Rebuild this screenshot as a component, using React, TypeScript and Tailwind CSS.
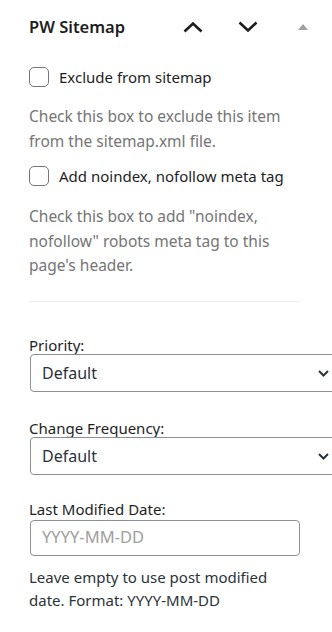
import React from "react";

function Chevron({ up }: { up?: boolean }) {
  return (
    <svg width="20" height="12" viewBox="0 0 20 12" fill="none">
      {up ? (
        <polyline points="1.5,10.5 10,2.5 18.5,10.5" stroke="#1e1e1e" strokeWidth="2.6" strokeLinecap="butt" strokeLinejoin="miter" />
      ) : (
        <polyline points="1.5,1.5 10,9.5 18.5,1.5" stroke="#1e1e1e" strokeWidth="2.6" strokeLinecap="butt" strokeLinejoin="miter" />
      )}
    </svg>
  );
}

function Triangle() {
  return (
    <svg width="10" height="6" viewBox="0 0 10 6">
      <polygon points="5,0 10,6 0,6" fill="#a0a0a0" />
    </svg>
  );
}

function Checkbox({ label }: { label: string }) {
  return (
    <div className="flex items-center gap-[10px] h-[20px]">
      <div className="w-[20px] h-[20px] rounded-[5px] border-[1.5px] border-[#757575] bg-white shrink-0" />
      <span className="text-[15px] leading-[20px] text-[#1e1e1e]">{label}</span>
    </div>
  );
}

function Select() {
  return (
    <div className="relative ml-[1px] w-[309px] h-[38px] rounded-[4px] border border-[#8c8f94] bg-white flex items-center pl-[11px]">
      <span className="text-[16px] text-[#2c3338]">Default</span>
      <svg className="absolute right-[9px] top-[15px]" width="11" height="7" viewBox="0 0 11 7" fill="none">
        <polyline points="1,1 5.5,5.5 10,1" stroke="#2c3338" strokeWidth="2" />
      </svg>
    </div>
  );
}

export default function App() {
  return (
    <div
      className="w-[332px] h-[632px] overflow-hidden bg-white"
      style={{ fontFamily: '"Noto Sans", "Open Sans", sans-serif' }}
    >
      <div className="flex items-center h-[54px] pl-[29px] pr-[2px]">
        <span className="text-[16.5px] font-semibold text-[#1e1e1e] flex-1">PW Sitemap</span>
        <div className="w-[55px] flex justify-center items-center">
          <Chevron up />
        </div>
        <div className="w-[55px] flex justify-center items-center">
          <Chevron />
        </div>
        <div className="w-[55px] flex justify-center items-center">
          <Triangle />
        </div>
      </div>
      <div className="pl-[29px] pr-[32px] flex flex-col">
        <div className="mt-[13px]">
          <Checkbox label="Exclude from sitemap" />
        </div>
        <p className="mt-[17px] text-[15.5px] leading-[25px] text-[#757575]">
          Check this box to exclude this item from the sitemap.xml file.
        </p>
        <div className="mt-[12px]">
          <Checkbox label="Add noindex, nofollow meta tag" />
        </div>
        <p className="mt-[18px] text-[15.5px] leading-[24.5px] text-[#757575]">
          Check this box to add "noindex, nofollow" robots meta tag to this page's header.
        </p>
        <div className="mt-[23px] h-px bg-[#f0f0f0]" />
        <label className="mt-[34px] text-[15px] leading-[18px] text-[#1e1e1e]">Priority:</label>
        <Select />
        <label className="mt-[27px] text-[15px] leading-[18px] text-[#1e1e1e]">Change Frequency:</label>
        <Select />
        <label className="mt-[25px] text-[15px] leading-[18px] text-[#1e1e1e]">Last Modified Date:</label>
        <div className="mt-[2px] ml-[1px] w-[270px] h-[36px] rounded-[4px] border border-[#8c8f94] bg-white flex items-center pl-[11px]">
          <span className="text-[16.5px] text-[#a0a0a0]">YYYY-MM-DD</span>
        </div>
        <p className="mt-[10px] text-[15px] leading-[23px] text-[#2c3338]">
          Leave empty to use post modified date. Format: YYYY-MM-DD
        </p>
      </div>
    </div>
  );
}
